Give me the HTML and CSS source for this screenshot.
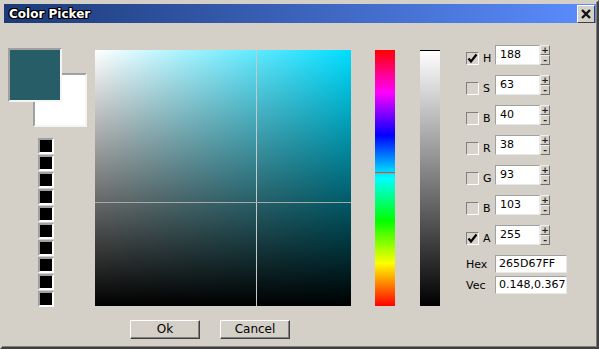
FILE: index.html
```html
<!DOCTYPE html>
<html lang="en">

<head>
    <meta charset="UTF-8">
    <title>Color Picker</title>
    <link rel="stylesheet" href="styles.css">
</head>

<body>
    <div class="window">
        <div class="titlebar">
            <span class="title">Color Picker</span>
            <div class="close">
                <svg width="12" height="12" viewBox="0 0 12 12">
                    <path d="M2 2 L10 10 M10 2 L2 10" stroke="#111" stroke-width="2.4" fill="none" />
                </svg>
            </div>
        </div>

        <div class="content">
            <div class="swatches">
                <div class="swatch-pair">
                    <div class="swatch secondary"></div>
                    <div class="swatch primary"></div>
                </div>
                <div class="history">
                    <div class="slot"></div>
                    <div class="slot"></div>
                    <div class="slot"></div>
                    <div class="slot"></div>
                    <div class="slot"></div>
                    <div class="slot"></div>
                    <div class="slot"></div>
                    <div class="slot"></div>
                    <div class="slot"></div>
                    <div class="slot"></div>
                </div>
            </div>

            <div class="sv">
                <div class="cross-v"></div>
                <div class="cross-h"></div>
            </div>

            <div class="hue-bar"><div class="hue-marker"></div></div>
            <div class="alpha-bar"><div class="alpha-marker"></div></div>

            <div class="controls">
                <div class="row">
                    <div class="check on"><svg width="11" height="11" viewBox="0 0 11 11"><path d="M1.5 5.5 L4 8.5 L9.5 1.5" stroke="#000" stroke-width="2.2" fill="none" /></svg></div>
                    <span class="label">H</span>
                    <div class="field">188</div>
                    <div class="spin"><span class="plus">+</span><span class="minus">-</span></div>
                </div>
                <div class="row">
                    <div class="check"></div>
                    <span class="label">S</span>
                    <div class="field">63</div>
                    <div class="spin"><span class="plus">+</span><span class="minus">-</span></div>
                </div>
                <div class="row">
                    <div class="check"></div>
                    <span class="label">B</span>
                    <div class="field">40</div>
                    <div class="spin"><span class="plus">+</span><span class="minus">-</span></div>
                </div>
                <div class="row">
                    <div class="check"></div>
                    <span class="label">R</span>
                    <div class="field">38</div>
                    <div class="spin"><span class="plus">+</span><span class="minus">-</span></div>
                </div>
                <div class="row">
                    <div class="check"></div>
                    <span class="label">G</span>
                    <div class="field">93</div>
                    <div class="spin"><span class="plus">+</span><span class="minus">-</span></div>
                </div>
                <div class="row">
                    <div class="check"></div>
                    <span class="label">B</span>
                    <div class="field">103</div>
                    <div class="spin"><span class="plus">+</span><span class="minus">-</span></div>
                </div>
                <div class="row alpha-row">
                    <div class="check on"><svg width="11" height="11" viewBox="0 0 11 11"><path d="M1.5 5.5 L4 8.5 L9.5 1.5" stroke="#000" stroke-width="2.2" fill="none" /></svg></div>
                    <span class="label">A</span>
                    <div class="field">255</div>
                    <div class="spin"><span class="plus">+</span><span class="minus">-</span></div>
                </div>
                <div class="text-row hex-row">
                    <span class="text-label">Hex</span>
                    <div class="text-field">265D67FF</div>
                </div>
                <div class="text-row">
                    <span class="text-label">Vec</span>
                    <div class="text-field">0.148,0.367</div>
                </div>
            </div>
        </div>

        <div class="buttons">
            <div class="btn">Ok</div>
            <div class="btn">Cancel</div>
        </div>
    </div>
</body>

</html>
```

FILE: styles.css
```css
body {
    margin: 0;
    font-family: "DejaVu Sans", Verdana, sans-serif;
}

.window {
    width: 599px;
    height: 349px;
    box-sizing: border-box;
    background-color: #d4d0c8;
    border: 2px solid;
    border-color: #d4d0c8 #404040 #404040 #d4d0c8;
    box-shadow: inset -1px -1px 0 #808080;
    padding: 2px 1px 0 2px;
}

.titlebar {
    height: 19px;
    display: flex;
    align-items: center;
    justify-content: space-between;
    background: linear-gradient(to right, #1c3a78, #5b8dff);
}

.title {
    color: #fff;
    font-size: 12px;
    font-weight: bold;
    margin-left: 5px;
    text-shadow: 1px 0 0 #000, -1px 0 0 #000, 0 1px 0 #000, 0 -1px 0 #000,
        1px 1px 0 #000, -1px -1px 0 #000, 1px -1px 0 #000, -1px 1px 0 #000;
}

.close {
    width: 16px;
    height: 16px;
    margin-right: 1px;
    background-color: #d4d0c8;
    border: 1px solid;
    border-color: #fff #404040 #404040 #fff;
    display: flex;
    align-items: center;
    justify-content: center;
}

.content {
    height: 283px;
    box-sizing: border-box;
    padding: 22px 0 0 4px;
    display: flex;
    align-items: flex-start;
}

/* left column */
.swatches {
    width: 79px;
    margin-top: 3px;
}

.swatch-pair {
    position: relative;
    height: 79px;
    box-sizing: border-box;
    padding: 25px 0 0 25px;
}

.swatch {
    width: 50px;
    height: 50px;
    border: 2px solid;
    border-color: #a0a0a0 #f4f4f4 #f4f4f4 #a0a0a0;
}

.primary {
    position: absolute;
    top: 0;
    left: 0;
    background-color: #265d67;
}

.secondary {
    background-color: #fff;
}

.history {
    display: flex;
    flex-direction: column;
    gap: 1px;
    margin: 11px 0 0 30px;
}

.slot {
    width: 12px;
    height: 12px;
    background-color: #000;
    border: 2px solid;
    border-color: #a0a0a0 #fff #fff #a0a0a0;
}

/* saturation / brightness square */
.sv {
    position: relative;
    width: 256px;
    height: 256px;
    margin: 5px 0 0 8px;
    background: linear-gradient(to top, #000, rgba(0, 0, 0, 0)),
        linear-gradient(to right, #fff, #00ddff);
}

.cross-v {
    position: absolute;
    left: 161px;
    top: 0;
    width: 1px;
    height: 256px;
    background-color: #c8c8c8;
}

.cross-h {
    position: absolute;
    top: 152px;
    left: 0;
    width: 256px;
    height: 1px;
    background-color: #a8a8a8;
}

.hue-bar {
    position: relative;
    width: 20px;
    height: 256px;
    margin: 5px 0 0 24px;
    background: linear-gradient(to bottom, #f00 0%, #f0f 16.67%, #00f 33.33%,
            #0ff 50%, #0f0 66.67%, #ff0 83.33%, #f00 100%);
}

.hue-marker {
    position: absolute;
    top: 122px;
    left: 0;
    width: 20px;
    height: 1px;
    background-color: #ff3c14;
}

.alpha-bar {
    position: relative;
    width: 20px;
    height: 256px;
    margin: 5px 0 0 25px;
    background: linear-gradient(to bottom, #fff, #000);
}

.alpha-marker {
    position: absolute;
    top: 0;
    left: 0;
    width: 20px;
    height: 1px;
    background-color: #000;
}

/* right column */
.controls {
    margin-left: 26px;
    font-size: 11px;
    color: #000;
}

.row {
    display: flex;
    align-items: flex-start;
    height: 20px;
    margin-bottom: 10px;
}

.alpha-row {
    margin-top: 10px;
}

.check {
    width: 11px;
    height: 11px;
    margin-top: 7px;
    border: 1px solid;
    border-color: #808080 #fff #fff #808080;
    background-color: #d8d4cc;
    display: flex;
    align-items: center;
    justify-content: center;
}

.label {
    width: 12px;
    margin: 7px 0 0 4px;
    line-height: 13px;
}

.field {
    width: 39px;
    height: 18px;
    line-height: 18px;
    padding-left: 4px;
    background-color: #fff;
    border: 1px solid;
    border-color: #a0a0a0 #e8e8e8 #e8e8e8 #a0a0a0;
}

.spin {
    display: flex;
    flex-direction: column;
    width: 10px;
}

.spin span {
    height: 8px;
    overflow: hidden;
    display: flex;
    align-items: center;
    justify-content: center;
    font-size: 9px;
    font-weight: bold;
    line-height: 8px;
    color: #222;
    border: 1px solid;
    border-color: #eee #707070 #707070 #eee;
}

.text-row {
    display: flex;
    align-items: center;
    height: 18px;
    margin-bottom: 3px;
}

.hex-row {
    margin-top: 1px;
}

.text-label {
    width: 29px;
}

.text-field {
    width: 67px;
    height: 16px;
    line-height: 16px;
    padding-left: 3px;
    background-color: #fff;
    border: 1px solid;
    border-color: #a0a0a0 #e8e8e8 #e8e8e8 #a0a0a0;
}

/* bottom buttons */
.buttons {
    display: flex;
    gap: 20px;
    padding: 14px 0 0 126px;
}

.btn {
    width: 68px;
    height: 17px;
    line-height: 17px;
    text-align: center;
    font-size: 12px;
    border: 1px solid;
    border-color: #fff #404040 #404040 #fff;
    box-shadow: inset -1px -1px 0 #808080;
}
```
